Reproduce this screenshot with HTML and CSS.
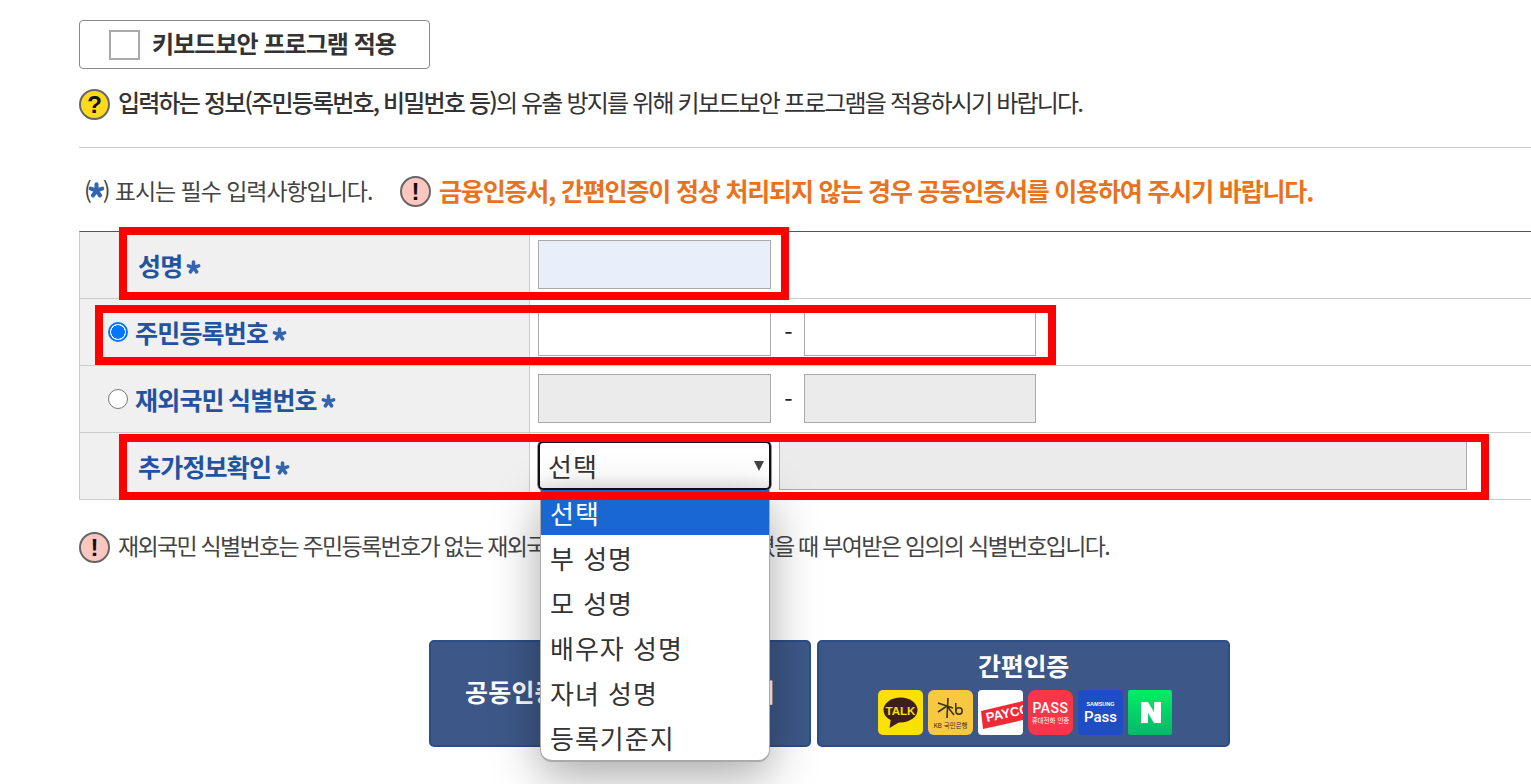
FILE: index.html
```html
<!DOCTYPE html>
<html lang="ko">
<head>
<meta charset="utf-8">
<title>본인확인</title>
<link rel="stylesheet" href="styles.css">
</head>
<body>
<svg class="defs" width="0" height="0" aria-hidden="true">
  <symbol id="star" viewBox="0 0 20 20">
    <g stroke="#3565ae" stroke-width="4.800" stroke-linecap="round" fill="none">
      <path d="M10 10V2.800"/><path d="M10 10L16.800 7.800"/><path d="M10 10L14.200 15.800"/><path d="M10 10L5.800 15.800"/><path d="M10 10L3.200 7.800"/>
    </g>
  </symbol>
</svg>
<main class="page">
  <label class="kb-box"><span class="kb-check"></span><span class="kb-text">키보드보안 프로그램 적용</span></label>
  <p class="help-line">
    <span class="icon icon-q">?</span>
    <span class="txt"><b class="med">입력하는 정보(주민등록번호, 비밀번호 등)</b>의 유출 방지를 위해 키보드보안 프로그램을 적용하시기 바랍니다.</span>
  </p>
  <hr class="rule">
  <div class="notice">
    <span class="req"><span>(</span><svg class="star star-sm"><use href="#star"/></svg><span>) 표시는 필수 입력사항입니다.</span></span>
    <span class="icon icon-x">!</span>
    <strong class="warn">금융인증서, 간편인증이 정상 처리되지 않는 경우 공동인증서를 이용하여 주시기 바랍니다.</strong>
  </div>

  <div class="form-wrap">
    <div class="form-table">
      <div class="row">
        <div class="head head-plain">성명<svg class="star"><use href="#star"/></svg></div>
        <div class="cell"><span class="input input-focus"></span></div>
      </div>
      <div class="row">
        <div class="head"><span class="radio radio-on"></span>주민등록번호<svg class="star"><use href="#star"/></svg></div>
        <div class="cell"><span class="input"></span><span class="dash">-</span><span class="input input-end"></span></div>
      </div>
      <div class="row">
        <div class="head"><span class="radio"></span>재외국민 식별번호<svg class="star"><use href="#star"/></svg></div>
        <div class="cell"><span class="input input-off"></span><span class="dash">-</span><span class="input input-off input-end"></span></div>
      </div>
      <div class="row">
        <div class="head head-plain">추가정보확인<svg class="star"><use href="#star"/></svg></div>
        <div class="cell cell-extra">
          <span class="select">선택<i class="caret"></i></span>
          <span class="input input-off input-wide"></span>
        </div>
      </div>
    </div>
    <ul class="popup">
      <li class="opt opt-on">선택</li>
      <li class="opt">부 성명</li>
      <li class="opt">모 성명</li>
      <li class="opt">배우자 성명</li>
      <li class="opt">자녀 성명</li>
      <li class="opt">등록기준지</li>
    </ul>
    <span class="frame frame-1"></span>
    <span class="frame frame-2"></span>
    <span class="frame frame-3"></span>
  </div>

  <p class="note">
    <span class="icon icon-x">!</span>
    <span class="txt">재외국민 식별번호는 주민등록번호가 없는 재외국민이 국내 거소신고를 하였을 때 부여받은 임의의 식별번호입니다.</span>
  </p>

  <div class="actions">
    <button class="btn btn-cert" type="button">공동인증서 / 민간 금융인증서</button>
    <button class="btn btn-easy" type="button">
      <span class="easy-title">간편인증</span>
      <span class="logos">
        <svg class="logo" viewBox="0 0 45 45"><rect width="45" height="45" rx="5" fill="#fae100"/><ellipse cx="22.500" cy="20" rx="17" ry="12.500" fill="#3c1e1e"/><path d="M13 28l-1.500 10 10-6z" fill="#3c1e1e"/><text x="22.500" y="24.500" class="lg lg-talk">TALK</text></svg>
        <svg class="logo" viewBox="0 0 45 45"><rect width="45" height="45" rx="6" fill="#f9c843"/><path d="M10 13l15 5M20 8l-1 20M10 22l9-6 7 9" stroke="#3a3028" stroke-width="1.600" fill="none"/><circle cx="31" cy="21" r="3.200" stroke="#3a3028" stroke-width="1.500" fill="none"/><path d="M27.800 13v8" stroke="#3a3028" stroke-width="1.500"/><text x="22.500" y="38" class="lg lg-kb">KB 국민은행</text></svg>
        <svg class="logo" viewBox="0 0 45 45"><rect width="45" height="45" rx="4" fill="#fff"/><path d="M3 21l42-10v19l-40 9z" fill="#ee2a35"/><text x="9" y="32" class="lg lg-payco" transform="rotate(-12 9 32)">PAYCO</text></svg>
        <svg class="logo" viewBox="0 0 45 45"><rect width="45" height="45" rx="8" fill="#f7364a"/><text x="22.500" y="23" class="lg lg-pass">PASS</text><text x="22.500" y="33" class="lg lg-pass2">휴대전화 인증</text></svg>
        <svg class="logo" viewBox="0 0 45 45"><rect width="45" height="45" rx="4" fill="#1f4dc5"/><text x="22.500" y="16" class="lg lg-sam">SAMSUNG</text><text x="22.500" y="32" class="lg lg-spass">Pass</text></svg>
        <svg class="logo logo-n" viewBox="0 0 44 45"><defs><linearGradient id="ng" x1="0" y1="0" x2="0" y2="1"><stop offset="0" stop-color="#03ed66"/><stop offset="1" stop-color="#05b868"/></linearGradient></defs><rect width="44" height="45" rx="2" fill="url(#ng)"/><path d="M13 12h7l6 10V12h7v21h-7l-6-10v10h-7z" fill="#fff"/></svg>
      </span>
    </button>
  </div>
</main>
</body>
</html>
```
FILE: styles.css
```css
* { box-sizing: border-box; }
html, body { margin: 0; padding: 0; height: 784px; overflow: hidden; background: #fff; }
body { font-family: "Noto Sans CJK KR", "Noto Sans", sans-serif; color: #333; }
.defs { position: absolute; }
.page { padding: 20px 0 0 79px; width: 1531px; }

.kb-box { display: flex; align-items: center; width: 351px; height: 49px; border: 1px solid #888; border-radius: 4px; padding-left: 29px; }
.kb-check { width: 31px; height: 30px; border: 2px solid #aaa; margin-right: 12px; }
.kb-text { font-size: 24px; font-weight: 700; letter-spacing: -0.95px; line-height: 26px; padding-bottom: 4px; }

.help-line { display: flex; align-items: center; gap: 8px; margin: 20px 0 0; height: 31px; font-size: 24px; letter-spacing: -1.82px; white-space: nowrap; }
.txt { line-height: 26px; padding-bottom: 5px; }
.med { font-weight: 500; }
.icon { flex: none; display: inline-flex; align-items: center; justify-content: center; width: 31px; height: 31px; border-radius: 50%; border: 2px solid #666; font-family: "Liberation Sans", sans-serif; font-weight: 700; font-size: 24px; line-height: 1; color: #111; letter-spacing: 0; }
.icon-q { background: #ffd91c; }
.icon-x { background: #fdc7c0; }

.rule { border: 0; border-top: 1px solid #ccc; margin: 27px 0 0; height: 0; }

.notice { display: flex; align-items: center; margin: 28px 0 0 5px; height: 31px; white-space: nowrap; }
.req { font-size: 23px; letter-spacing: -1.05px; color: #444; width: 316px; display: flex; align-items: center; white-space: pre; line-height: 26px; padding-bottom: 4px; }
.warn { margin-left: 8px; font-size: 25px; font-weight: 700; color: #e8721e; letter-spacing: -1.17px; line-height: 26px; padding-bottom: 4px; }
.star { width: 15px; height: 15px; margin: 4px 0 0 4px; flex: none; }
.star-sm { width: 17px; height: 17px; margin: 2px -2px 0 -3px; }

.form-wrap { position: relative; margin-top: 24px; }
.form-table { border-top: 1px solid #555; border-left: 1px solid #ccc; }
.row { display: grid; grid-template-columns: 450px 1fr; height: 67px; border-bottom: 1px solid #ccc; }
.head { display: flex; align-items: center; padding-left: 28px; background: #f0f0f0; border-right: 1px solid #ccc; font-size: 25px; font-weight: 700; color: #23539f; letter-spacing: -0.8px; word-spacing: -2px; white-space: nowrap; }
.head-plain { padding-left: 58px; }
.cell { display: flex; align-items: flex-start; padding: 8px 0 0 8px; }
.input { display: block; width: 233px; height: 49px; border: 1px solid #aaa; background: #fff; flex: none; }
.input-end { width: 232px; }
.input-focus { background: #e8effb; }
.input-off { background: #ebebeb; }
.input-wide { width: 688px; margin-left: 8px; }
.dash { width: 33px; height: 49px; padding-left: 2px; line-height: 49px; text-align: center; font-size: 24px; color: #222; }
.radio { flex: none; width: 20px; height: 20px; border-radius: 50%; border: 1.500px solid #767676; background: #fff; margin-right: 7px; }
.radio-on { border: 2px solid #0075ff; background: radial-gradient(circle, #0075ff 0 6.500px, #fff 7px); }
.select { position: relative; display: flex; align-items: center; width: 233px; height: 49px; padding-left: 8px; border: 2px solid #111; border-radius: 5px; box-shadow: 0 0 0 0.500px #333; background: linear-gradient(#fff 70%, #f0f0f0); font-size: 26px; color: #333; letter-spacing: 1px; }
.caret { position: absolute; right: 5px; top: 18px; width: 0; height: 0; border-left: 5px solid transparent; border-right: 5px solid transparent; border-top: 10px solid #444; }

.popup { position: absolute; left: 461px; top: 259px; width: 230px; height: 272px; margin: 0; padding: 0; list-style: none; background: #fff; border: solid #aaa; border-width: 0 1px 2px; border-radius: 0 0 12px 12px; box-shadow: 0 14px 48px rgba(0,0,0,.34); z-index: 2; overflow: hidden; }
.opt { height: 45px; padding-left: 9px; font-size: 26px; line-height: 45px; letter-spacing: 1px; color: #333; white-space: nowrap; }
.opt-on { background: #1967d2; color: #fff; }

.frame { position: absolute; border: 8px solid #f00; z-index: 3; pointer-events: none; }
.frame-1 { left: 40px; top: -4px; width: 670px; height: 73px; }
.frame-2 { left: 16px; top: 74px; width: 961px; height: 60px; }
.frame-3 { left: 40px; top: 203px; width: 1370px; height: 66px; }

.note { display: flex; align-items: center; gap: 8px; margin: 32px 0 0; height: 31px; font-size: 23px; letter-spacing: -1.7px; color: #444; white-space: nowrap; }

.actions { display: flex; gap: 6px; margin: 77px 0 0 350px; }
.btn { height: 107px; border: 2px solid #2c4d85; border-radius: 5px; background: #3d5888; color: #fff; font-family: inherit; font-weight: 700; padding: 0; }
.btn-cert { width: 382px; font-size: 25px; letter-spacing: 0.2px; padding-bottom: 6px; white-space: nowrap; }
.btn-easy { width: 413px; display: flex; flex-direction: column; align-items: center; }
.easy-title { font-size: 25px; line-height: 25px; margin-top: 11px; letter-spacing: -0.3px; }
.logos { display: flex; gap: 5px; margin-top: 12px; padding-left: 2px; }
.logo { width: 45px; height: 45px; display: block; }
.logo-n { width: 44px; }
.lg { font-family: "Liberation Sans", "Noto Sans CJK KR", sans-serif; text-anchor: middle; font-weight: 700; }
.lg-talk { font-size: 11.500px; fill: #fae100; }
.lg-kb { font-size: 6.500px; fill: #3a3028; font-weight: 400; font-family: "Noto Sans CJK KR", sans-serif; }
.lg-payco { font-size: 13px; fill: #fff; text-anchor: start; }
.lg-pass { font-size: 14px; fill: #fff; letter-spacing: 0.500px; font-family: "Roboto", sans-serif; font-weight: 500; }
.lg-pass2 { font-size: 6.500px; fill: #fff; font-family: "Noto Sans CJK KR", sans-serif; font-weight: 400; }
.lg-sam { font-size: 5.500px; fill: #fff; }
.lg-spass { font-size: 15px; fill: #fff; font-family: "Roboto", sans-serif; font-weight: 500; }
```
